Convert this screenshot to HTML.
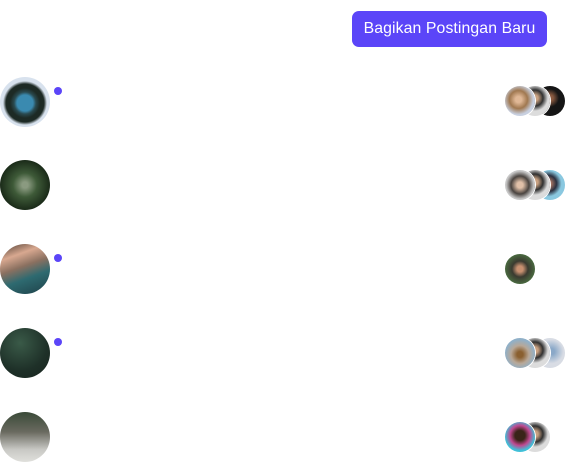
<!DOCTYPE html>
<html><head><style>
body{margin:0;width:565px;height:463px;background:#fff;position:relative;overflow:hidden;font-family:"Liberation Sans",sans-serif}
.btn{position:absolute;left:352px;top:11px;width:195px;height:36px;background:#5b45f8;border-radius:7px;color:#fff;font-size:15.8px;line-height:36px;text-align:center;letter-spacing:0.1px}
.a{position:absolute;left:0;width:50px;height:50px;border-radius:50%}
.d{position:absolute;left:54px;width:8px;height:8px;border-radius:50%;background:#5b45f8}
.s{position:absolute;width:30px;height:30px;border-radius:50%;box-shadow:0 0 0 1px #fff}
</style></head><body>
<div class="btn">Bagikan Postingan Baru</div>

<div class="a" style="top:77px;background:radial-gradient(circle at 50% 52%,#3a8ab0 0 8px,#2a4a50 11px,#1d2a25 15px 19px,#d8e2ee 22px)"></div>
<div class="d" style="top:87px"></div>
<div class="s" style="left:535px;top:86px;background:radial-gradient(circle at 50% 40%,#8a5a40 0 3px,#151515 9px)"></div>
<div class="s" style="left:520px;top:86px;background:radial-gradient(circle at 50% 40%,#c8a080 0 3px,#303030 8px,#dcdcdc 13px)"></div>
<div class="s" style="left:505px;top:86px;background:radial-gradient(circle at 45% 45%,#e0b896 0 3px,#a07850 9px,#c8d0e0 15px)"></div>

<div class="a" style="top:160px;background:radial-gradient(circle,#8a9a80 0 3px,#3e5a38 12px,#1a2a18 25px)"></div>
<div class="s" style="left:535px;top:170px;background:radial-gradient(circle at 45% 45%,#a07060 0 3px,#2a3040 8px,#8ac8e0 13px)"></div>
<div class="s" style="left:520px;top:170px;background:radial-gradient(circle at 50% 40%,#c8a080 0 3px,#303030 8px,#dcdcdc 13px)"></div>
<div class="s" style="left:505px;top:170px;background:radial-gradient(circle at 50% 50%,#e0c0a8 0 3px,#4a4440 9px,#c8c8c8 14px)"></div>

<div class="a" style="top:244px;background:linear-gradient(160deg,#4a3a30 0,#d8a890 25%,#8a7060 45%,#2e6a70 65%,#1e4048 100%)"></div>
<div class="d" style="top:254px"></div>
<div class="s" style="left:505px;top:254px;background:radial-gradient(circle at 50% 50%,#c89070 0 3px,#3a3a30 8px,#4a6a40 15px)"></div>

<div class="a" style="top:328px;background:radial-gradient(circle at 40% 30%,#3a5a48 0,#1e3028 60%,#18241e)"></div>
<div class="d" style="top:338px"></div>
<div class="s" style="left:535px;top:338px;background:radial-gradient(circle at 55% 45%,#8aa8c8 0 3px,#d8dce4 12px)"></div>
<div class="s" style="left:520px;top:338px;background:radial-gradient(circle at 50% 40%,#c8a080 0 3px,#303030 8px,#dcdcdc 13px)"></div>
<div class="s" style="left:505px;top:338px;background:radial-gradient(circle at 50% 55%,#8a6030 0 3px,#b8a898 9px,#90b0c8 15px)"></div>

<div class="a" style="top:412px;background:linear-gradient(180deg,#3a4a38 0,#6a6a60 40%,#c8c8c4 75%,#e0e0dc 100%)"></div>
<div class="s" style="left:520px;top:422px;background:radial-gradient(circle at 50% 40%,#c8a080 0 3px,#303030 8px,#dcdcdc 13px)"></div>
<div class="s" style="left:505px;top:422px;background:radial-gradient(circle at 50% 45%,#3a2418 0 5px,#c04890 10px,#40c0d8 15px)"></div>
</body></html>
